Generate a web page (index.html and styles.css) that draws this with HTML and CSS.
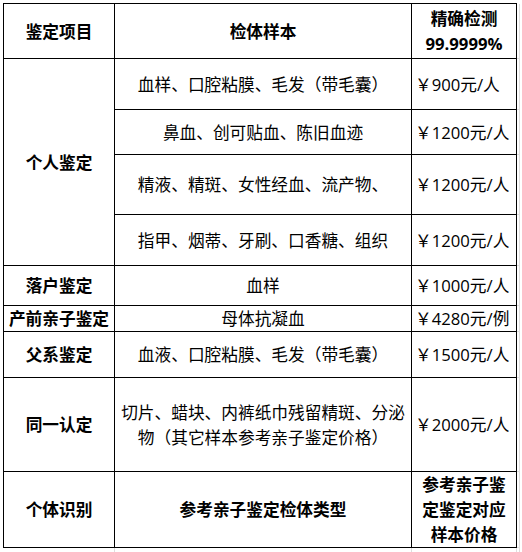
FILE: index.html
```html
<!DOCTYPE html>
<html lang="zh-CN">
<head>
<meta charset="utf-8">
<title>鉴定项目价格表</title>
<link rel="stylesheet" href="styles.css">
</head>
<body>
<table class="sheet">
  <colgroup>
    <col class="col-kind">
    <col class="col-sample">
    <col class="col-price">
    <col class="col-grid">
  </colgroup>
  <tbody>
    <tr class="r-head">
      <td class="c b">鉴定项目</td>
      <td class="c b">检体样本</td>
      <td class="c b">精确检测<br>99.9999%</td>
      <td class="g"></td>
    </tr>
    <tr class="r1">
      <td class="c b" rowspan="4">个人鉴定</td>
      <td class="c">血样、口腔粘膜、毛发（带毛囊）</td>
      <td class="c p">￥900元/人</td>
      <td class="g"></td>
    </tr>
    <tr class="r2">
      <td class="c">鼻血、创可贴血、陈旧血迹</td>
      <td class="c p">￥1200元/人</td>
      <td class="g"></td>
    </tr>
    <tr class="r3">
      <td class="c">精液、精斑、女性经血、流产物、</td>
      <td class="c p">￥1200元/人</td>
      <td class="g"></td>
    </tr>
    <tr class="r4">
      <td class="c">指甲、烟蒂、牙刷、口香糖、组织</td>
      <td class="c p">￥1200元/人</td>
      <td class="g"></td>
    </tr>
    <tr class="r5">
      <td class="c b">落户鉴定</td>
      <td class="c">血样</td>
      <td class="c p">￥1000元/人</td>
      <td class="g"></td>
    </tr>
    <tr class="r6">
      <td class="c b">产前亲子鉴定</td>
      <td class="c">母体抗凝血</td>
      <td class="c p">￥4280元/例</td>
      <td class="g"></td>
    </tr>
    <tr class="r7">
      <td class="c b">父系鉴定</td>
      <td class="c">血液、口腔粘膜、毛发（带毛囊）</td>
      <td class="c p">￥1500元/人</td>
      <td class="g"></td>
    </tr>
    <tr class="r8">
      <td class="c b">同一认定</td>
      <td class="c">切片、蜡块、内裤纸巾残留精斑、分泌<br>物（其它样本参考亲子鉴定价格）</td>
      <td class="c p">￥2000元/人</td>
      <td class="g"></td>
    </tr>
    <tr class="r9">
      <td class="c b">个体识别</td>
      <td class="c b">参考亲子鉴定检体类型</td>
      <td class="c b">参考亲子鉴<br>定鉴定对应<br>样本价格</td>
      <td class="g"></td>
    </tr>
    <tr class="r-tail">
      <td class="t"></td>
      <td class="t"></td>
      <td class="t"></td>
      <td class="t"></td>
    </tr>
  </tbody>
</table>
</body>
</html>
```
FILE: styles.css
```css
html, body {
  margin: 0;
  padding: 0;
  background: #ffffff;
}

body {
  padding: 3px 0 0 3px;
  font-family: "Open Sans", "Noto Sans CJK SC", sans-serif;
  font-size: 16.7px;
  color: #000000;
}

.sheet {
  border-collapse: collapse;
  table-layout: fixed;
  width: 517px;
}

.col-kind { width: 111px; }
.col-sample { width: 297px; }
.col-price { width: 105px; }
.col-grid { width: 3px; }

.c {
  border: 1px solid #000000;
  padding: 0;
  text-align: center;
  vertical-align: middle;
  line-height: 25px;
  white-space: nowrap;
  overflow: hidden;
}

.b {
  font-weight: 700;
}

.p {
  text-align: left;
  padding-left: 3px;
}

.g {
  padding: 0;
  border-bottom: 1px solid #dedede;
  border-right: 1px solid #dedede;
}

.t {
  padding: 0;
  border-right: 1px solid #dedede;
}

.r-head { height: 55px; }
.r1 { height: 51px; }
.r2 { height: 45px; }
.r3 { height: 60px; }
.r4 { height: 51px; }
.r5 { height: 40px; }
.r6 { height: 26px; }
.r7 { height: 46px; }
.r8 { height: 94px; }
.r9 { height: 76px; }
.r-tail { height: 6px; }
```
